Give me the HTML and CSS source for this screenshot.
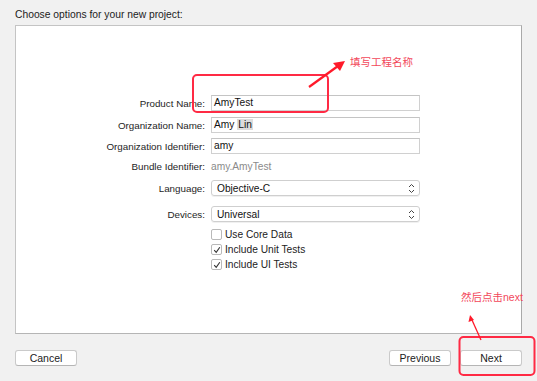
FILE: index.html
```html
<!DOCTYPE html>
<html lang="zh">
<head>
    <meta charset="UTF-8">
    <title>Choose options for your new project</title>
    <link rel="stylesheet" href="styles.css">
</head>
<body>

<div class="sheet">
    <div class="sheet-title">Choose options for your new project:</div>

    <div class="panel">
        <div class="form">
            <div class="row">
                <label class="row-label">Product Name:</label>
                <div class="field">AmyTest</div>
            </div>
            <div class="row row-org">
                <label class="row-label">Organization Name:</label>
                <div class="field">Amy <span class="sel">Lin</span></div>
            </div>
            <div class="row row-id">
                <label class="row-label">Organization Identifier:</label>
                <div class="field">amy</div>
            </div>
            <div class="row row-bundle">
                <label class="row-label">Bundle Identifier:</label>
                <div class="static">amy.AmyTest</div>
            </div>
            <div class="row row-lang">
                <label class="row-label">Language:</label>
                <div class="popup">
                    <span>Objective-C</span>
                    <svg class="stepper" width="7" height="11" viewBox="0 0 7 11"><path d="M1 4 L3.5 1.5 L6 4 M1 7 L3.5 9.5 L6 7" fill="none" stroke="#444" stroke-width="1"/></svg>
                </div>
            </div>
            <div class="row row-dev">
                <label class="row-label">Devices:</label>
                <div class="popup">
                    <span>Universal</span>
                    <svg class="stepper" width="7" height="11" viewBox="0 0 7 11"><path d="M1 4 L3.5 1.5 L6 4 M1 7 L3.5 9.5 L6 7" fill="none" stroke="#444" stroke-width="1"/></svg>
                </div>
            </div>
            <div class="row row-check first-check">
                <span class="row-label"></span>
                <span class="box"></span>
                <span class="check-text">Use Core Data</span>
            </div>
            <div class="row row-check">
                <span class="row-label"></span>
                <span class="box"><svg width="8" height="8" viewBox="0 0 8 8"><path d="M1.2 4.2 L3.2 6.4 L6.8 1.2" fill="none" stroke="#333" stroke-width="1.1"/></svg></span>
                <span class="check-text">Include Unit Tests</span>
            </div>
            <div class="row row-check">
                <span class="row-label"></span>
                <span class="box"><svg width="8" height="8" viewBox="0 0 8 8"><path d="M1.2 4.2 L3.2 6.4 L6.8 1.2" fill="none" stroke="#333" stroke-width="1.1"/></svg></span>
                <span class="check-text">Include UI Tests</span>
            </div>
        </div>
    </div>

    <div class="buttons">
        <button class="btn">Cancel</button>
        <div class="nav-buttons">
            <button class="btn">Previous</button>
            <button class="btn">Next</button>
        </div>
    </div>
</div>

<!-- annotations on top of the screenshot -->
<svg class="marks" width="537" height="381" viewBox="0 0 537 381">
    <rect x="193" y="75" width="135" height="37" rx="4" fill="none" stroke="#ff2a44" stroke-width="2"/>
    <path d="M309 87 L338 66" stroke="#ff1a2a" stroke-width="2.2"/>
    <path d="M345 61 L333 63 L340 71 Z" fill="#ff1a2a"/>
    <rect x="459.5" y="337" width="75" height="38" rx="4" fill="none" stroke="#ff2a44" stroke-width="2"/>
    <path d="M481 340 L472 320" stroke="#ff1a2a" stroke-width="1.3"/>
    <path d="M470 315 L468.5 322 L474 320 Z" fill="#ff1a2a"/>
</svg>
<span class="note note-name">填写工程名称</span>
<span class="note note-next">然后点击next</span>

</body>
</html>
```

FILE: styles.css
```css
body {
    margin: 0;
    padding: 0;
    background-color: #f1f1f1;
    font-family: "Liberation Sans", Arial, "Noto Sans CJK SC", sans-serif;
    font-size: 10.2px;
    color: #222;
    width: 537px;
    height: 381px;
    overflow: hidden;
    position: relative;
}

.sheet {
    padding: 8px 15px 0 15px;
}

.sheet-title {
    height: 17px;
    line-height: 14px;
    font-size: 10.3px;
}

.panel {
    width: 505px;
    height: 307px;
    background: #fff;
    border: 1px solid #c4c4c4;
    border-right-color: #a9a9a9;
    border-bottom-color: #b5b5b5;
}

.form {
    display: flex;
    flex-direction: column;
    padding-top: 69px;
}

.row {
    display: flex;
    align-items: center;
    gap: 6px;
    height: 16px;
}

.row-label {
    width: 189px;
    text-align: right;
    color: #1e1e1e;
    font-size: 9.8px;
    flex: 0 0 189px;
}

.field {
    width: 203px;
    height: 14px;
    line-height: 14px;
    border: 1px solid #d0d0d0;
    border-top-color: #c4c4c4;
    padding: 0 2px 0 2px;
    color: #111;
}

.sel {
    background: #dcdcdc;
    padding: 0 1px;
}

.row-org { margin-top: 6px; }
.row-id { margin-top: 5px; }
.row-bundle { margin-top: 4px; }
.row-lang { margin-top: 6px; }
.row-dev { margin-top: 10px; }

.static {
    color: #8a8a8a;
}

.popup {
    width: 198px;
    height: 14px;
    border: 1px solid #cfcfcf;
    border-radius: 3px;
    box-shadow: 0 1px 0 rgba(0, 0, 0, 0.06);
    padding: 0 4px 0 5px;
    display: flex;
    align-items: center;
    justify-content: space-between;
    color: #111;
}

.stepper {
    display: block;
}

.row-check {
    height: 15px;
    gap: 0;
}

.first-check { margin-top: 5px; }

.row-check .row-label {
    flex-basis: 195px;
    width: 195px;
}

.box {
    width: 9px;
    height: 9px;
    border: 1px solid #b9b9b9;
    border-radius: 2px;
    background: #fff;
    margin-right: 3px;
    display: flex;
    align-items: center;
    justify-content: center;
}

.check-text {
    color: #222;
}

.buttons {
    display: flex;
    justify-content: space-between;
    margin-top: 16px;
}

.nav-buttons {
    display: flex;
    gap: 9px;
}

.btn {
    width: 62px;
    height: 16px;
    padding: 0;
    font-family: "Liberation Sans", Arial, sans-serif;
    font-size: 10.5px;
    line-height: 14px;
    color: #222;
    background: #fff;
    border: 1px solid #cacaca;
    border-bottom-color: #b5b5b5;
    border-radius: 3px;
}

/* annotations */
.marks {
    position: absolute;
    top: 0;
    left: 0;
    pointer-events: none;
}

.note {
    position: absolute;
    color: #f2475a;
    font-size: 10.5px;
    line-height: 12px;
    white-space: nowrap;
}

.note-name {
    left: 350px;
    top: 56px;
}

.note-next {
    left: 461px;
    top: 291px;
}
```
